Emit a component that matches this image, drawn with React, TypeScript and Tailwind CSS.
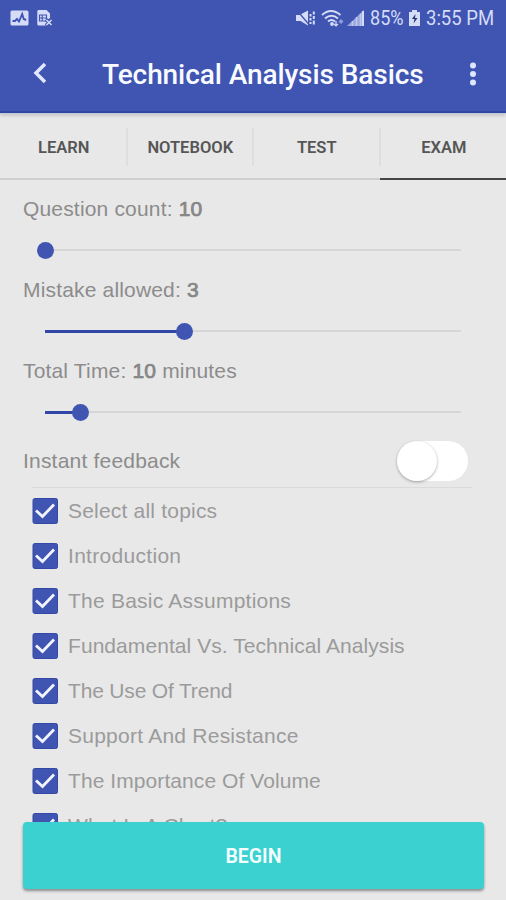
import React from "react";

function StatusBar() {
  return (
    <div className="flex h-9 items-center text-[#d5dcf8]">
      <svg className="ml-[10px] h-[18px] w-[19px]" viewBox="0 0 19 18">
        <rect x="0.5" y="1.5" width="18" height="15" rx="1.5" fill="#d5dcf8" />
        <path d="M2.5 12h2.500l2-2 2 2.500 3.200-7.500 1.500 5 2.500 1" fill="none" stroke="#4055b2" strokeWidth="1.900" />
      </svg>
      <svg className="ml-[8px] h-[18px] w-[16px]" viewBox="0 0 16 18">
        <path d="M1.500 1h8l3.500 3.500V9l-3 2v5.500H1.500Q0.300 16.500 0.300 15V2.500Q0.300 1 1.500 1Z" fill="#d5dcf8" />
        <path d="M2.500 6h7v6h-7zM2.500 9h7M5.200 6v6" fill="none" stroke="#4055b2" strokeWidth="1.100" />
        <path d="M9 10.500l6 6M15 10.500l-6 6" stroke="#4055b2" strokeWidth="3.500" />
        <path d="M9.500 11l5 5M14.500 11l-5 5" stroke="#d5dcf8" strokeWidth="1.500" />
      </svg>
      <svg className="ml-auto h-[18px] w-[20px]" viewBox="0 0 20 18">
        <path d="M0 6h3.500L12 1.500v15L4.500 12H0Z" fill="#d5dcf8" />
        <path d="M1 1.500l12 14" stroke="#4055b2" strokeWidth="1.300" />
        <path d="M14.500 5v2.500M14.500 9v2.500M14.500 13v2M17.800 2.500v3M17.800 7v3M17.800 11.500v4" fill="none" stroke="#d5dcf8" strokeWidth="2" />
      </svg>
      <svg className="ml-[5px] h-[19px] w-[23px]" viewBox="0 0 23 19">
        <path d="M1 6Q10 -2 19.500 6M4 9.500Q10.500 4 17 9.500M7 12.500Q10.500 9.500 14 12.500" fill="none" stroke="#d5dcf8" strokeWidth="2" />
        <circle cx="11" cy="15" r="1.900" fill="#d5dcf8" />
        <path d="M15 12v5M13 15l2 2 2-2" fill="none" stroke="#d5dcf8" strokeWidth="1.200" />
        <path d="M20 10l2.500 2.500-2.500 2.500-2.500-2.500z" fill="#8e9cdb" />
      </svg>
      <svg className="ml-[3px] h-[18px] w-[17px]" viewBox="0 0 17 18">
        <path d="M0 17L17 1v16Z" fill="#9ba9df" />
        <path d="M5.500 12v5M9.500 8v9M13.500 4.500V17" stroke="#bdc8ef" strokeWidth="1.500" />
        <path d="M16 2v15" stroke="#d5dcf8" strokeWidth="2" />
      </svg>
      <span className="ml-[6px] w-[33px] translate-y-px whitespace-nowrap"><span className="inline-block origin-left scale-x-[0.860] text-[21px]">85%</span></span>
      <svg className="ml-[6px] h-[18px] w-[11px]" viewBox="0 0 11 18">
        <path d="M3 1h5v2h3v14H0V3h3Z" fill="#d5dcf8" />
        <path d="M6.500 5L3 10h2.500L4.500 14.500 8.500 9H6Z" fill="#26346f" />
      </svg>
      <span className="ml-[6px] w-[80px] translate-y-px whitespace-nowrap"><span className="inline-block origin-left scale-x-[0.880] text-[21px]">3:55 PM</span></span>
    </div>
  );
}

function Slider({ knob }: { knob: number }) {
  return (
    <div className="relative mx-[45px] flex h-[18px] items-center">
      <div className="h-[2px] w-full bg-[#d6d6d6]" />
      <div className="absolute left-0 h-[3px] bg-[#3047a7]" style={{ width: knob }} />
      <div className="absolute size-[17px] rounded-full bg-[#4055b2]" style={{ left: knob - 8.5 }} />
    </div>
  );
}

function Setting({ label, value, unit, knob }: { label: string; value: string; unit?: string; knob: number }) {
  return (
    <div className="flex h-[81px] flex-col">
      <div className="ml-[23px] h-[51px] text-[21px] leading-[38px] tracking-[0.170px] whitespace-pre text-[#8c8c8c]">
        {label} <span className="[-webkit-text-stroke:0.7px_#808080]">{value}</span>{unit}
      </div>
      <Slider knob={knob} />
    </div>
  );
}

const topics = [
  { name: "Select all topics", spacing: "tracking-[0.200px]" },
  { name: "Introduction", spacing: "tracking-[0.300px]" },
  { name: "The Basic Assumptions", spacing: "tracking-[0.230px]" },
  { name: "Fundamental Vs. Technical Analysis", spacing: "tracking-[0.060px]" },
  { name: "The Use Of Trend", spacing: "tracking-[-0.170px]" },
  { name: "Support And Resistance", spacing: "tracking-[0.240px]" },
  { name: "The Importance Of Volume", spacing: "tracking-[0.080px]" },
  { name: "What Is A Chart?", spacing: "tracking-[0.100px]" },
];

function Topic({ name, spacing }: { name: string; spacing: string }) {
  return (
    <div className="flex h-[45px] items-center">
      <svg className="ml-[32px] size-[26px] shrink-0" viewBox="0 0 26 26">
        <rect x="1" y="0.500" width="24.500" height="25" rx="1.800" fill="#4055b2" stroke="#3449a6" />
        <path d="M4 12.500L10.500 18.500L22 6.500" fill="none" stroke="#f2f5ff" strokeWidth="2.800" />
      </svg>
      <span className={"ml-[10px] text-[21px] whitespace-nowrap text-[#9b9b9b] " + spacing}>{name}</span>
    </div>
  );
}

export default function App() {
  return (
    <div className="relative h-[900px] w-[506px] overflow-hidden bg-[#e8e8e8] font-['Liberation_Sans',sans-serif]">
      <header className="h-[114px] border-b border-[#c3c7db] bg-[#4055b2] font-[Roboto,sans-serif] shadow-[inset_0_-2px_0_#3045a0,0_2px_3px_#0002]">
        <StatusBar />
        <div className="flex h-[75px] items-center">
          <svg className="ml-[32px] h-[22px] w-[15px] -translate-y-px" viewBox="0 0 15 22">
            <path d="M13 2L4 11l9 9" fill="none" stroke="#e2e8ff" strokeWidth="3.500" />
          </svg>
          <h1 className="ml-[55px] translate-y-px text-[28px] leading-[36px] font-medium tracking-[-0.080px] whitespace-nowrap text-[#f8faff]">Technical Analysis Basics</h1>
          <svg className="mr-[29px] ml-auto h-[24px] w-[8px]" viewBox="0 0 8 24">
            <circle cx="4" cy="3.500" r="3" fill="#dfe6ff" /><circle cx="4" cy="12" r="3" fill="#dfe6ff" /><circle cx="4" cy="20.500" r="3" fill="#dfe6ff" />
          </svg>
        </div>
      </header>
      <nav className="grid h-[66px] grid-cols-4 font-[Roboto,sans-serif] text-[16.500px] font-semibold text-[#565656]">
        {["LEARN", "NOTEBOOK", "TEST", "EXAM"].map((tab, i) => (
          <div key={tab} className={"flex items-start border-b-2 pt-[14px] " + (i === 3 ? "border-[#454545]" : "border-[#cfcfcf]")}>
            <div className="flex h-[38px] w-full items-center">
              <span className="flex-1 translate-x-px translate-y-px text-center">{tab}</span>
              {i < 3 && <span className="-mr-px h-full w-[2px] bg-[#dedede]" />}
            </div>
          </div>
        ))}
      </nav>
      <main className="pt-[10px]">
        <Setting label="Question count:" value="10" knob={0} />
        <Setting label="Mistake allowed:" value="3" knob={139} />
        <Setting label="Total Time:" value="10" unit=" minutes" knob={35} />
        <div className="flex h-[54px] items-center pt-[2px]">
          <span className="ml-[23px] text-[21px] tracking-[0.200px] text-[#8c8c8c]">Instant feedback</span>
          <div className="mr-[38px] ml-auto h-[40px] w-[71px] rounded-full bg-white">
            <div className="size-[40px] rounded-full bg-white shadow-[0_1px_3px_#0005]" />
          </div>
        </div>
        <div className="mr-[34px] ml-[32px] h-px bg-[#dadada]" />
        {topics.map((topic) => <Topic key={topic.name} {...topic} />)}
      </main>
      <button className="absolute top-[822px] left-[23px] h-[67px] w-[461px] rounded bg-[#3cd1d1] pt-[2px] font-[Roboto,sans-serif] text-[19.500px] font-semibold text-[#f4ffff] shadow-[0_2px_3px_#0006]">BEGIN</button>
    </div>
  );
}
